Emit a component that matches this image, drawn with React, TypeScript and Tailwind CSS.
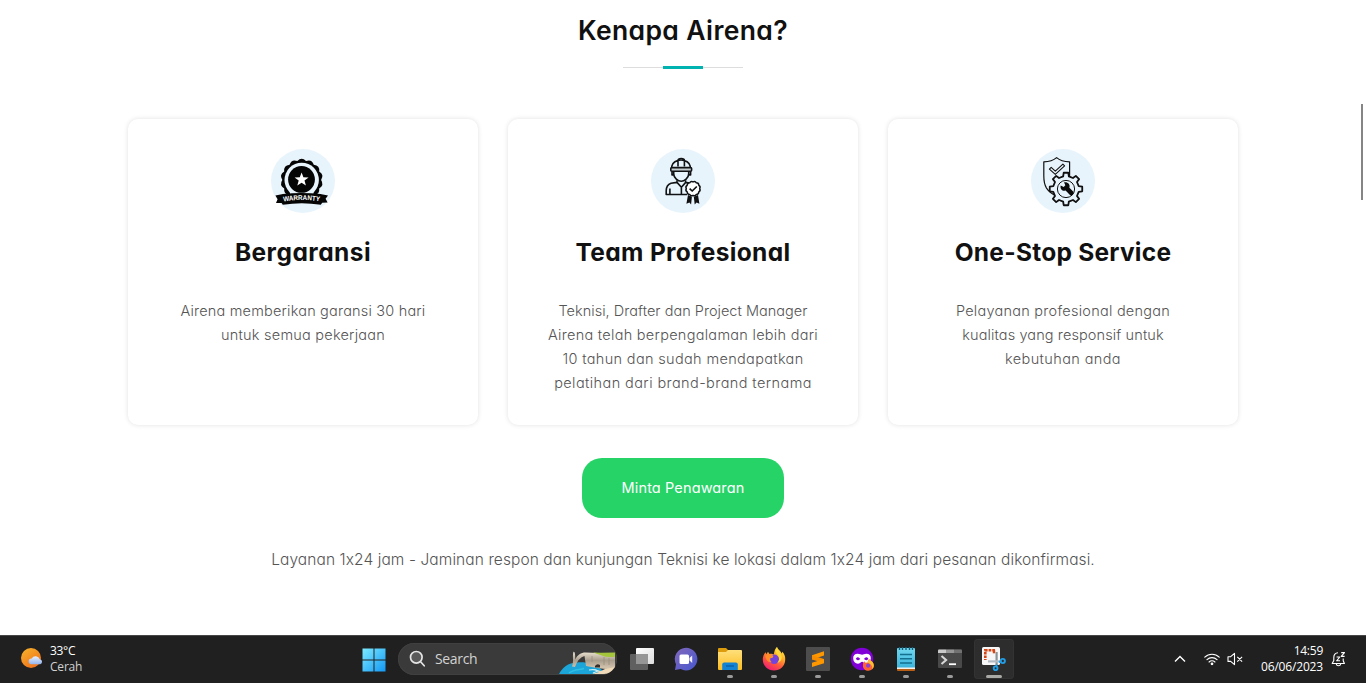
import type { ReactNode } from "react";

type Line = { text: string; tracking: string };

/* Closed outline with `lobes` rounded bumps between radii r1 and r2. */
function scallop(cx: number, cy: number, r1: number, r2: number, lobes: number) {
  let d = "";
  for (let i = 0; i < lobes; i++) {
    const a0 = (i / lobes) * Math.PI * 2;
    const a1 = ((i + 0.5) / lobes) * Math.PI * 2;
    const a2 = ((i + 1) / lobes) * Math.PI * 2;
    const p = (a: number, r: number) => `${(cx + r * Math.cos(a)).toFixed(2)} ${(cy + r * Math.sin(a)).toFixed(2)}`;
    if (i === 0) d += `M${p(a0, r1)}`;
    d += `Q${p(a1, r2 * 2 - r1)} ${p(a2, r1)}`;
  }
  return d + "Z";
}

/* Toothed wheel outline with flat teeth. */
function gear(cx: number, cy: number, inner: number, outer: number, teeth: number) {
  const pts: string[] = [];
  for (let i = 0; i < teeth; i++) {
    const a = (i / teeth) * Math.PI * 2 - Math.PI / 2;
    const w = Math.PI / teeth;
    const steps: [number, number][] = [
      [-0.56, inner],
      [-0.36, outer],
      [0.36, outer],
      [0.56, inner],
    ];
    for (const [k, r] of steps) {
      pts.push(`${(cx + r * Math.cos(a + k * w)).toFixed(2)} ${(cy + r * Math.sin(a + k * w)).toFixed(2)}`);
    }
  }
  return `M${pts.join("L")}Z`;
}

function WarrantyIcon() {
  return (
    <svg width="64" height="64" viewBox="0 0 64 64">
      <path d={scallop(30.7, 31, 19.4, 21.4, 14)} fill="#050505" />
      <circle cx="30.7" cy="31" r="17.2" fill="#e8f4fc" />
      <path d="M19 43.6h23.4v6H19z" fill="#e8f4fc" />
      <circle cx="30.5" cy="30.4" r="13.4" fill="#050505" />
      <path d="M30.6 23.4l1.8 4.8 5.2.2-4.1 3.2 1.4 5-4.3-2.9-4.3 2.9 1.4-5-4.1-3.2 5.2-.2z" fill="#fff" />
      <path d="M4.4 46.4l6.4-1.2 1-.2q18.7-2 37.8 0l1 .2 6.4 1.2-2.4 3.4 2 3.8-5.4.2-1.4 2q-19-3-38 0l-1.2-1.8-5.6 0 1.6-3.8z" fill="#050505" />
      <path id="ribbon-arc" d="M12.4 52.5q18.3-3 36.8 0" fill="none" />
      <text className="font-['Liberation_Sans'] font-bold" fontSize="6.9" fill="#fff">
        <textPath href="#ribbon-arc" textLength="36.5" lengthAdjust="spacingAndGlyphs">WARRANTY</textPath>
      </text>
    </svg>
  );
}

function WorkerIcon() {
  return (
    <svg width="64" height="64" viewBox="0 0 64 64" fill="none" stroke="#101214" strokeWidth="1.6" strokeLinejoin="round">
      <path d="M20.8 18.6v-1.4a9.3 7.3 0 0 1 18.4 0v1.4M27 17.5v-6.3q0-1.7 3.2-1.7t3.2 1.7v6.3" />
      <rect x="19.8" y="18.6" width="20.8" height="3.6" rx="1" fill="#c5ccd0" />
      <path d="M21 22.4v3.5h1.8M39.6 22.4v3.5h-1.8M22.7 22.2v2.6c0 4.4 4.4 7.4 7.5 7.4s7.5-3 7.5-7.4v-2.6" />
      <path d="M26 31.2v2.2l-6 .8q-4.8 1.7-4.8 7.6v3.7h21M34.6 31.2v2.2l3.6.6M26 33.4l4.4 4.8 4.3-4.8M18.9 39.5v5.8M30.4 38.2v7" />
      <path d="M37 46l-1.6 8.8 3-1.4 1.7 2.2.8-7.8zM47 46l1.4 8.8-2.8-1.4-1.9 2.2-.9-7.8z" fill="#111" stroke="none" />
      <path d={scallop(42, 39.6, 6.7, 7.4, 12)} fill="#fff" strokeWidth="1.5" />
      <path d="M38.6 39.6l2.6 2.4 4.6-4.5" strokeWidth="1.7" />
    </svg>
  );
}

function ServiceIcon() {
  return (
    <svg width="64" height="64" viewBox="0 0 64 64" fill="none" stroke="#111" strokeLinejoin="round">
      <path d="M25.6 8.6q4.6 4 13 4.2v14q0 7.2-2 11.2-3.5 6-10.5 9.3-7-2.8-10.6-8.2-2.7-4.3-2.7-12.3v-14q8.2-.2 12.8-4.2z" strokeWidth="1.2" />
      <path d="M18.4 20.2l1.8-1.8 4.1 3.8 7.6-7 1.7 1.7-9.3 8.5z" strokeWidth="1.1" />
      <path d={gear(35, 40, 13, 16.4, 8)} fill="#e8f4fc" strokeWidth="1.8" />
      <circle cx="35" cy="40" r="8.6" strokeWidth="1" />
      <path
        d="M29.7 36.4l3 1.5 1.6-1.6-1.3-3c3.8-.6 6.5 2 5.4 5.4l4 4.1q.9 1.9-.7 3.3-1.7.9-3-.3l-4.1-4.2c-3.4.7-5.8-2-4.9-5.2z"
        fill="#0b0b0b"
        stroke="none"
      />
    </svg>
  );
}

function Card({ icon, title, titleTracking, lines }: { icon: ReactNode; title: string; titleTracking: string; lines: Line[] }) {
  return (
    <article className="flex h-[306px] w-[350px] flex-col items-center rounded-[10px] bg-white pt-[30px] shadow-[0_0_5px_rgba(0,0,0,0.12)]">
      <div className="size-16 rounded-full bg-[#e8f4fc]">{icon}</div>
      <h3 className={`mt-[21px] text-[24.5px] leading-9 font-bold whitespace-nowrap text-[#111] ${titleTracking}`}>{title}</h3>
      <p className="mt-[29px] text-center text-[14.5px] leading-6 font-light whitespace-nowrap text-[#555]">
        {lines.map((l) => (
          <span key={l.text} className={`block ${l.tracking}`}>
            {l.text}
          </span>
        ))}
      </p>
    </article>
  );
}

function Slot({ children, running, active }: { children: ReactNode; running?: boolean; active?: boolean }) {
  return (
    <div className="flex h-12 w-11 items-center justify-center">
      <div
        className={
          active
            ? "relative flex size-10 items-center justify-center rounded-[4px] bg-[#2d2d2d] ring-1 ring-[#333] ring-inset"
            : "relative flex size-10 items-center justify-center"
        }
      >
        {children}
        {running && (
          <span
            className={
              active
                ? "absolute bottom-[1px] left-3 h-[3px] w-4 rounded-full bg-[#a9aaa6]"
                : "absolute bottom-[1px] left-[17px] h-[3px] w-1.5 rounded-full bg-[#9a9a9a]"
            }
          />
        )}
      </div>
    </div>
  );
}

function WeatherIcon() {
  return (
    <svg width="24" height="24" viewBox="0 0 24 24">
      <defs>
        <linearGradient id="sun" x1="0" y1="0" x2=".7" y2="1">
          <stop stopColor="#f6b62c" />
          <stop offset="1" stopColor="#f0701b" />
        </linearGradient>
        <linearGradient id="cloud" x1="0" y1="0" x2="0" y2="1">
          <stop stopColor="#e6efff" />
          <stop offset="1" stopColor="#94b4ec" />
        </linearGradient>
      </defs>
      <circle cx="11" cy="11" r="10" fill="url(#sun)" />
      <path d="M11.5 17.2a2.9 2.9 0 0 1 .2-5.8 4.5 4.5 0 0 1 8.1.9 2.5 2.5 0 0 1 .4 4.9z" fill="url(#cloud)" />
    </svg>
  );
}

function StartIcon() {
  return (
    <svg className="ml-px mt-px" width="24" height="24" viewBox="0 0 24 24">
      <defs>
        <linearGradient id="start" x1="0" y1="0" x2="24" y2="24" gradientUnits="userSpaceOnUse">
          <stop stopColor="#7eecff" />
          <stop offset="1" stopColor="#1096f5" />
        </linearGradient>
      </defs>
      <path d="M.5.5h11v11H.5zM12.5.5h11v11h-11zM.5 12.5h11v11H.5zM12.5 12.5h11v11h-11z" fill="url(#start)" />
    </svg>
  );
}

function SearchPicture() {
  return (
    <svg width="57" height="31" viewBox="0 0 57 31">
      <defs>
        <linearGradient id="rock" x1="0" y1="0" x2="0" y2="1">
          <stop stopColor="#ece3d3" />
          <stop offset=".5" stopColor="#a99d8c" />
          <stop offset="1" stopColor="#d8c9b1" />
        </linearGradient>
      </defs>
      <path d="M0 30C3 24 9 18.5 18 18.5c8-1 19 1.5 25 7.5l3 4z" fill="#1ba5d8" />
      <path d="M10 29c5-4 10-3 15-4.500" fill="none" stroke="#2fbfe4" strokeWidth="1.6" />
      <path d="M33 25l9 2 6-3 9-2c-1 5-5 8-13 8H33l7-2z" fill="#f0d9b8" />
      <path d="M30 26q6-1 9 1l-5 2" fill="none" stroke="#c9eff7" strokeWidth="1.1" />
      <path d="M13 22.500c2-5 .2-10.500 1.400-14.500 1.700-1 1.900 3.500 1.900 7.600C18.500 10.500 22 8.600 26.500 8.500L39 9l17 1v13l-9 2-9-1-11-2-1.500-10q-6 1.500-9.500 11z" fill="url(#rock)" />
      <path d="M36 22q2-3 5-1v2.500h-5z" fill="#342f2c" />
      <path d="M34 8.400l8 .4 14-.2v4.200q-8 1-14-1.600z" fill="#a5c63c" />
      <path d="M45 13v8M50 14v7M33 12v6" stroke="#9b8f7e" strokeWidth=".8" />
    </svg>
  );
}

function TaskViewIcon() {
  return (
    <svg width="24" height="24" viewBox="0 0 24 24">
      <defs>
        <linearGradient id="tv" x1="0" y1="0" x2="1" y2="1">
          <stop stopColor="#fff" />
          <stop offset="1" stopColor="#dcdcdc" />
        </linearGradient>
      </defs>
      <rect x="6" y="1" width="18" height="16" rx="1" fill="url(#tv)" />
      <rect x="0" y="7" width="18" height="16" rx="1" fill="#606060" />
      <path d="M6 7h12v10H6z" fill="#969696" />
    </svg>
  );
}

function ChatIcon() {
  return (
    <svg width="24" height="24" viewBox="0 0 24 24">
      <defs>
        <linearGradient id="chat" x1="0" y1="0" x2="1" y2="1">
          <stop stopColor="#8167bb" />
          <stop offset="1" stopColor="#4657cf" />
        </linearGradient>
      </defs>
      <path d="M12 .8a11.3 11.3 0 1 1-5.2 21.3L1 23l1-5.800A11.300 11.300 0 0 1 12 .8z" fill="url(#chat)" />
      <rect x="5.5" y="7.5" width="9.5" height="9.5" rx="1.5" fill="#fff" />
      <path d="M15.500 11l2.700-2.600v7.500l-2.700-2.500z" fill="#f1efff" />
    </svg>
  );
}

function FolderIcon() {
  return (
    <svg width="24" height="24" viewBox="0 0 24 24">
      <defs>
        <linearGradient id="folder" x1="0" y1="0" x2="0" y2="1">
          <stop stopColor="#ffe07c" />
          <stop offset="1" stopColor="#fcbd22" />
        </linearGradient>
      </defs>
      <path d="M0 2q0-1 1-1h7l2 2v5H0z" fill="#dc9c0b" />
      <path d="M0 5h8l2-2h13q1 0 1 1v18q0 1-1 1H1q-1 0-1-1z" fill="url(#folder)" />
      <path d="M4.2 23v-5.500q0-2 2-2h11.600q2 0 2 2V23z" fill="#1282d3" />
      <path d="M8 19h8" stroke="#0a5ea5" strokeWidth="1.3" />
    </svg>
  );
}

function FirefoxIcon() {
  return (
    <svg width="24" height="24" viewBox="0 0 24 24">
      <defs>
        <linearGradient id="fox" x1=".8" y1="0" x2=".25" y2="1">
          <stop stopColor="#fff04b" />
          <stop offset=".35" stopColor="#ffad27" />
          <stop offset=".65" stopColor="#ff573d" />
          <stop offset="1" stopColor="#ee1a78" />
        </linearGradient>
      </defs>
      <path d="M15 0c1.2 3 3.6 3.8 4.7 6.4l.7-1.6c2 2.3 3.2 5 2.8 8.5C22.7 19.6 18 23.5 12 23.5S.8 19 .8 12.800c0-3.200 1-5.600 2.800-7.600l.7 2L6 4.800 7.500 7c2-.4 3.300-.1 4.400.5C12.200 4.400 13 2 15 0z" fill="url(#fox)" />
      <circle cx="12.2" cy="12.3" r="4.8" fill="#7443dd" />
      <path d="M3.5 8.500c2-1.800 5.600-1.800 8 .5l-1.200 2H8.500c-.8 1.500-.2 3.200 1.300 4.200C5.700 15.800 3.200 12 3.500 8.500z" fill="#ff8d28" />
      <path d="M16 8c1.800 2.800 1.500 6-.8 7.700 2.900-.2 5-2.900 4.500-6.200C19.200 6.300 15 4.400 15 0c-2 2.500-1.700 5.700 1 8z" fill="#ffd83a" />
    </svg>
  );
}

function SublimeIcon() {
  return (
    <svg width="24" height="24" viewBox="0 0 24 24">
      <rect width="24" height="24" rx="1" fill="#4d4d4d" />
      <path d="M18 4.300v4.300L6 12.500V8.200z" fill="#ff9800" />
      <path d="M6 8.300l12 3.800v4.100L6 12.500z" fill="#f78c00" />
      <path d="M18 12v4.200L6 20v-4.200z" fill="#ff9800" />
    </svg>
  );
}

function MaskIcon() {
  return (
    <svg width="24" height="24" viewBox="0 0 24 24">
      <circle cx="12" cy="12" r="11.2" fill="#8000d7" />
      <path d="M7.700 6.800c2 0 3.200 1 4.400 1s2.300-1 4.200-1c3 0 4.700 1.800 4.500 4.800-.2 3.200-2.200 5.200-4.500 5.200-2 0-3-2-4.200-2s-2.200 2-4.300 2c-2.500 0-4.400-2-4.600-5.200-.2-3 1.600-4.800 4.500-4.800z" fill="#fff" />
      <path d="M5.800 11.700q2.200-3 4.500.4-2.400 2.500-4.500-.4zM13.900 12.100q2.300-3.400 4.500-.4-2 2.900-4.500.4z" fill="#8000d7" />
      <g transform="translate(12.3 12)">
        <path d="M7 0c.5 1.600 4.500 2.400 4.500 6.500 0 3-2.400 5.200-5.500 5.200S.6 9.600.6 6.400c0-2 .6-3.200 1.500-4.200l1 1.600 2.300-.2C5.400 2 6 .8 7 0z" fill="#ff662f" />
        <path d="M7 0c.5 1.600 4.500 2.400 4.500 6.500 0 1.300-.6 2.700-1.500 3.400C10.400 6 7.600 5 5.400 3.600 5.400 2 6 .8 7 0z" fill="#ffbd35" />
        <circle cx="5.8" cy="6.7" r="2.1" fill="#8d40d5" />
      </g>
    </svg>
  );
}

function NotepadIcon() {
  return (
    <svg width="24" height="24" viewBox="0 0 24 24">
      <defs>
        <linearGradient id="note" x1="0" y1="0" x2="0" y2="1">
          <stop stopColor="#70d7ef" />
          <stop offset="1" stopColor="#3db4dc" />
        </linearGradient>
      </defs>
      <path d="M3 19h18v4q0 1-1 1H4q-1 0-1-1z" fill="#b95f15" />
      <path d="M3 18h18v4H3z" fill="#f5f0ea" />
      <path d="M3 2q0-1 1-1h16q1 0 1 1v18.500H3z" fill="url(#note)" />
      <path d="M5.500 0v3M8.500 0v3M12 0v3M15.500 0v3M18.500 0v3" stroke="#185f79" strokeWidth="1.4" />
      <path d="M6 7.500h12M6 11.800h12M6 16h12" stroke="#13708f" strokeWidth="1.5" />
    </svg>
  );
}

function TerminalIcon() {
  return (
    <svg width="24" height="24" viewBox="0 0 24 24">
      <rect y="2.5" width="24" height="18.5" rx="1" fill="#494949" />
      <path d="M0 6V3.500q0-1 1-1h7V6z" fill="#cacaca" />
      <path d="M8 2.500h8V6H8z" fill="#969696" />
      <path d="M16 2.500h7q1 0 1 1V6h-8z" fill="#727272" />
      <path d="M3.500 9l4.600 4-4.600 4" fill="none" stroke="#d8d8d8" strokeWidth="2.1" />
      <path d="M11 17.200h7" stroke="#fff" strokeWidth="1.8" />
    </svg>
  );
}

function SnipIcon() {
  return (
    <svg width="24" height="24" viewBox="0 0 24 24">
      <rect x="0" y="0" width="18" height="18" rx="1.5" fill="#f7f7f7" />
      <path d="M13 3.300H3.300V13" fill="none" stroke="#d64513" strokeWidth="2.6" strokeDasharray="2.7 1" />
      <path d="M12 3.300v3" stroke="#d64513" strokeWidth="2.4" />
      <path d="M14.600 5v13" stroke="#8b9298" strokeWidth="2.2" />
      <path d="M6 14.400h12.500" stroke="#b2bbc3" strokeWidth="2.2" />
      <circle cx="20.8" cy="14" r="2.1" fill="none" stroke="#209ee7" strokeWidth="1.9" />
      <circle cx="13.6" cy="21.3" r="1.900" fill="none" stroke="#209ee7" strokeWidth="1.9" />
      <path d="M17 15l2.200-.5M14.500 17.500v2" stroke="#209ee7" strokeWidth="1.8" />
    </svg>
  );
}

function Taskbar() {
  return (
    <footer className="flex h-12 shrink-0 border-t border-[#444746] bg-[#202020] font-['Open_Sans',sans-serif] text-white">
      <div className="-mt-px flex w-[351px] items-center pl-5">
        <WeatherIcon />
        <div className="ml-1.5 text-[12px] leading-4">
          <div className="tracking-[-0.3px]">33°C</div>
          <div className="tracking-[-0.2px] text-[#d0d0d0]">Cerah</div>
        </div>
      </div>
      <nav className="-mt-px flex items-center">
        <Slot>
          <StartIcon />
        </Slot>
        <div className="mx-[3px] flex h-8 w-[219px] items-center overflow-hidden rounded-full bg-[#3a3a3a] pl-[11px] ring-1 ring-[#404040] ring-inset">
          <svg width="18" height="18" viewBox="0 0 18 18" fill="#5a5a5a" stroke="#e4e4e4" strokeWidth="1.7" strokeLinecap="round">
            <circle cx="7.3" cy="7.3" r="5.8" />
            <path d="M11.600 11.800l3.600 4" />
          </svg>
          <span className="-mt-px ml-2 text-[14px] tracking-[-0.35px] text-[#d2d2d2]">Search</span>
          <span className="mt-px mr-px ml-auto">
            <SearchPicture />
          </span>
        </div>
        <Slot><TaskViewIcon /></Slot>
        <Slot><ChatIcon /></Slot>
        <Slot running><FolderIcon /></Slot>
        <Slot running><FirefoxIcon /></Slot>
        <Slot running><SublimeIcon /></Slot>
        <Slot running><MaskIcon /></Slot>
        <Slot running><NotepadIcon /></Slot>
        <Slot running><TerminalIcon /></Slot>
        <Slot running active><SnipIcon /></Slot>
      </nav>
      <div className="-mt-px ml-auto flex items-center pr-5">
        <svg width="12" height="12" viewBox="0 0 12 12" fill="none" stroke="#fff" strokeWidth="1.4">
          <path d="M1 8.500l5-5 5 5" />
        </svg>
        <svg className="ml-[18px]" width="16" height="14" viewBox="0 0 16 14" fill="none" stroke="#fff" strokeWidth="1.15" strokeLinecap="round">
          <path d="M.8 5.200a10.200 10.200 0 0 1 14.400 0M3 7.700a7.100 7.100 0 0 1 10 0M5.100 10a4.100 4.100 0 0 1 5.800 0" />
          <circle cx="8" cy="11.8" r=".8" fill="#fff" />
        </svg>
        <svg className="ml-[7px]" width="17" height="14" viewBox="0 0 17 14" fill="none" stroke="#fff" strokeWidth="1.1" strokeLinejoin="round">
          <path d="M1 4.700h2.700L7.500 1.400v11.200L3.700 9.400H1zM10.300 4.800l4.800 4.800M15.100 4.800l-4.800 4.800" />
        </svg>
        <div className="ml-[17px] text-right text-[12px] leading-4">
          <div className="tracking-[-0.25px]">14:59</div>
          <div className="tracking-[-0.17px]">06/06/2023</div>
        </div>
        <svg className="ml-2" width="15" height="16" viewBox="0 0 15 16" fill="none" stroke="#fff" strokeWidth="1.1" strokeLinejoin="round">
          <path d="M7 1.800C4.300 1.800 2.800 3.800 2.800 6.400v3L1.200 12.500h12.200L12.200 9.800V7.500M5.300 12.800q.3 2 2.200 2t2.200-2" />
          <path d="M5.600 6h3.200L5.600 9.800h3.400M10.200 1.600h3.300l-3.300 3.800h3.400" />
        </svg>
      </div>
    </footer>
  );
}

export default function App() {
  return (
    <div className="flex h-[683px] w-[1366px] flex-col overflow-hidden bg-white font-[Inter,sans-serif]">
      <div className="flex h-[635px]">
        <main className="flex grow flex-col items-center pl-[5px] [font-feature-settings:'cv11','calt'_0]">
          <h2 className="mt-[10px] text-[26.5px] leading-10 font-semibold tracking-[0.38px] whitespace-nowrap text-[#111]">Kenapa Airena?</h2>
          <div className="mt-4 flex h-[3px] w-[120px] items-center justify-center bg-[linear-gradient(#ddd,#ddd)] bg-[length:100%_1px] bg-[position:0_1px] bg-no-repeat">
            <div className="h-[3px] w-10 bg-[#00b3b0]" />
          </div>
          <section className="mt-[50px] flex gap-[30px]">
            <Card
              icon={<WarrantyIcon />}
              title="Bergaransi"
              titleTracking="tracking-[0.47px]"
              lines={[
                { text: "Airena memberikan garansi 30 hari", tracking: "tracking-[0.19px]" },
                { text: "untuk semua pekerjaan", tracking: "tracking-[0.23px]" },
              ]}
            />
            <Card
              icon={<WorkerIcon />}
              title="Team Profesional"
              titleTracking="tracking-[0.34px]"
              lines={[
                { text: "Teknisi, Drafter dan Project Manager", tracking: "tracking-[0.02px]" },
                { text: "Airena telah berpengalaman lebih dari", tracking: "tracking-[0.28px]" },
                { text: "10 tahun dan sudah mendapatkan", tracking: "tracking-[0.34px]" },
                { text: "pelatihan dari brand-brand ternama", tracking: "tracking-[0.41px]" },
              ]}
            />
            <Card
              icon={<ServiceIcon />}
              title="One-Stop Service"
              titleTracking="tracking-[0.25px]"
              lines={[
                { text: "Pelayanan profesional dengan", tracking: "tracking-[0.25px]" },
                { text: "kualitas yang responsif untuk", tracking: "tracking-[0.11px]" },
                { text: "kebutuhan anda", tracking: "tracking-[0.39px]" },
              ]}
            />
          </section>
          <button className="mt-[33px] h-[60px] w-[202px] shrink-0 rounded-[20px] bg-[#25d366] text-[14.5px] tracking-[0.12px] text-white">
            Minta Penawaran
          </button>
          <p className="mt-[29px] text-[15.5px] leading-[25px] font-light tracking-[0.09px] whitespace-nowrap text-[#555]">
            Layanan 1x24 jam - Jaminan respon dan kunjungan Teknisi ke lokasi dalam 1x24 jam dari pesanan dikonfirmasi.
          </p>
        </main>
        <div className="flex w-[5px] shrink-0">
          <div className="mt-[104px] h-24 w-0.5 bg-[#858585]" />
        </div>
      </div>
      <Taskbar />
    </div>
  );
}
